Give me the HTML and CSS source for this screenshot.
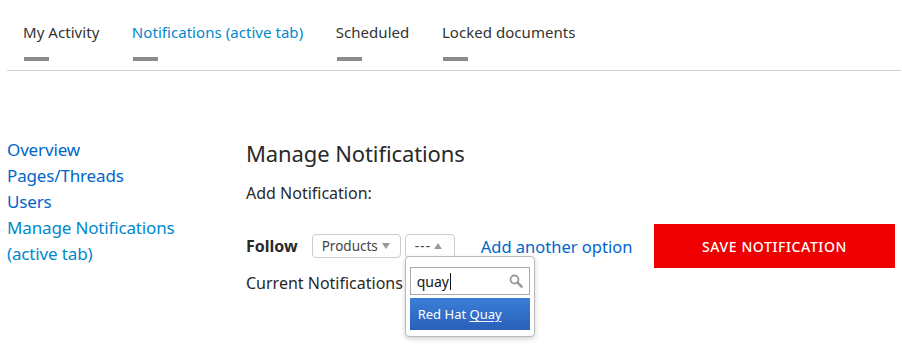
FILE: index.html
```html
<!DOCTYPE html>
<html lang="en">
<head>
<meta charset="utf-8">
<title>Manage Notifications</title>
<link rel="stylesheet" href="styles.css">
</head>
<body>
<div class="page">
  <nav class="tabs">
    <a class="tab" href="#"><span class="tab-label">My Activity</span><span class="tab-bar"></span></a>
    <a class="tab tab-active" href="#"><span class="tab-label">Notifications (active tab)</span><span class="tab-bar"></span></a>
    <a class="tab" href="#"><span class="tab-label">Scheduled</span><span class="tab-bar"></span></a>
    <a class="tab" href="#"><span class="tab-label">Locked documents</span><span class="tab-bar"></span></a>
  </nav>
  <div class="content">
    <aside class="sidenav">
      <a href="#" class="side-link">Overview</a>
      <a href="#" class="side-link">Pages/Threads</a>
      <a href="#" class="side-link">Users</a>
      <a href="#" class="side-link side-active">Manage Notifications<br>(active tab)</a>
    </aside>
    <main class="main">
      <h1 class="title">Manage Notifications</h1>
      <p class="subtitle">Add Notification:</p>
      <div class="follow-row">
        <span class="follow-label">Follow</span>
        <span class="select select-products"><span>Products</span><span class="caret caret-down"></span></span>
        <span class="select-wrap">
          <span class="select select-dash"><span class="dashes">---</span><span class="caret caret-up"></span></span>
          <div class="dropdown">
            <div class="search">
              <span class="search-text">quay</span><span class="cursor"></span>
              <svg class="search-icon" width="14" height="14" viewBox="0 0 14 14"><circle cx="5.5" cy="5.5" r="4" fill="none" stroke="#9a9a9a" stroke-width="1.8"/><path d="M8.4 8.4 L12.6 12.6" stroke="#9a9a9a" stroke-width="2.6" stroke-linecap="round"/></svg>
            </div>
            <div class="result"><span>Red Hat <u>Quay</u></span></div>
          </div>
        </span>
        <a href="#" class="add-option">Add another option</a>
        <button class="save-btn">SAVE NOTIFICATION</button>
      </div>
      <p class="current">Current Notifications</p>
    </main>
  </div>
</div>
</body>
</html>
```

FILE: styles.css
```css
* { box-sizing: border-box; }
html, body { margin: 0; padding: 0; background: #fff; }
html, body { min-height: 100%; height: 100%; }
body {
  font-family: "Noto Sans", "Open Sans", sans-serif;
  color: #151515;
}
.page { padding: 0 1px 0 7px; min-height: 354px; }
a { text-decoration: none; }

.tabs {
  display: flex;
  height: 71px;
  border-bottom: 1px solid #d2d2d2;
}
.tab {
  display: flex;
  flex-direction: column;
  padding: 21px 16.5px 0 16px;
  color: #333;
  font-size: 15px;
}
.tab-label { line-height: 22px; display: block; letter-spacing: 0.05px; }
.tab-bar {
  display: block;
  width: 25px;
  height: 4px;
  margin-top: 14px;
  margin-left: 1px;
  background: #8b8b8b;
}
.tab-active { color: #0088ce; }

.content { display: flex; }
.sidenav {
  width: 239px;
  flex: none;
  display: flex;
  flex-direction: column;
  padding-top: 66px;
}
.side-link {
  color: #0066cc;
  font-size: 17px;
  line-height: 26px;
  letter-spacing: -0.15px;
}
.side-link.side-active { color: #0088ce; }

.main {
  flex: 1;
  padding: 68px 6px 0 0;
}
.title {
  margin: 0;
  font-weight: 400;
  font-size: 22px;
  line-height: 28px;
  color: #292929;
  letter-spacing: -0.1px;
}
.subtitle {
  margin: 14px 0 0;
  font-size: 16px;
  line-height: 24px;
  color: #292929;
}
.follow-row {
  margin-top: 19px;
  height: 44px;
  display: flex;
  align-items: center;
}
.follow-label {
  font-weight: 700;
  font-size: 16px;
  margin-right: 14px;
  color: #292929;
}
.select {
  display: inline-flex;
  align-items: center;
  height: 24px;
  border: 1px solid #ccc;
  border-radius: 4px;
  padding: 0 9px;
  font-size: 13.5px;
  color: #444;
  background: #fff;
}
.select-products { width: 89px; }
.select-wrap { position: relative; margin-left: 4px; }
.select-dash { width: 50px; padding-left: 9px; }
.dashes { letter-spacing: 1.2px; }
.caret {
  display: inline-block;
  width: 0;
  height: 0;
  margin-left: 4px;
  border-left: 4px solid transparent;
  border-right: 4px solid transparent;
}
.caret-down { border-top: 6px solid #999; }
.caret-up { border-bottom: 6px solid #999; margin-left: 3px; }
.add-option {
  margin-left: 26px;
  color: #0066cc;
  font-size: 16.5px;
}
.save-btn {
  margin-left: auto;
  width: 241px;
  height: 44px;
  border: 0;
  background: #ee0000;
  color: #fff;
  font-family: "Noto Sans", "Open Sans", sans-serif;
  font-size: 14px;
  font-weight: 500;
  letter-spacing: 0.6px;
}
.current {
  margin: 3px 0 0;
  font-size: 16px;
  line-height: 24px;
  color: #292929;
}

.dropdown {
  position: absolute;
  top: 22px;
  left: 0;
  width: 130px;
  height: 81px;
  background: #fff;
  border: 1px solid #bbb;
  border-radius: 4px;
  box-shadow: 0 2px 5px rgba(0,0,0,0.18);
  padding: 10px 4px 0;
  z-index: 2;
}
.search {
  position: relative;
  display: flex;
  align-items: center;
  height: 28px;
  border: 1px solid #aaa;
  padding-left: 6px;
  font-size: 14px;
  color: #151515;
}
.cursor { display: inline-block; width: 1px; height: 17px; background: #151515; margin-left: 1px; }
.search-icon { position: absolute; right: 6px; top: 6px; }
.result {
  margin-top: 3px;
  height: 32px;
  display: flex;
  align-items: center;
  padding-left: 8px;
  font-size: 13px;
  color: #fff;
  background: linear-gradient(#3b7fd9, #2a5fb8);
}
.result u { text-underline-offset: 2px; }
```
